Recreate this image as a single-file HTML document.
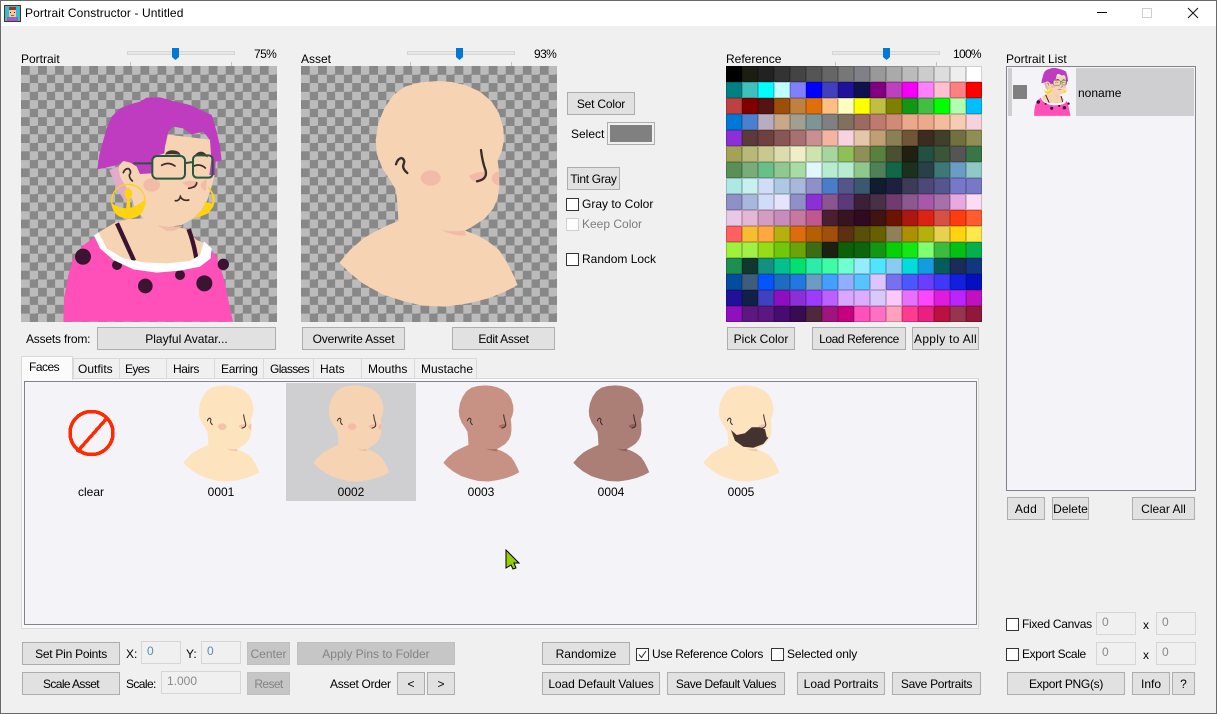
<!DOCTYPE html>
<html><head><meta charset="utf-8"><title>Portrait Constructor</title>
<style>
*{box-sizing:border-box}
html,body{margin:0;padding:0}
body{width:1217px;height:714px;overflow:hidden;background:#f0f0f0;position:relative;font:12px "Liberation Sans",sans-serif;color:#000}
.a{position:absolute}
.t{position:absolute;white-space:nowrap;line-height:14px}
.b{position:absolute;height:23px;background:#e1e1e1;border:1px solid #adadad;text-align:center;line-height:23px;white-space:nowrap}
.d{background:#c6c6c6;border-color:#c0c0c0;color:#838383}
.c{position:absolute;width:13px;height:13px;background:#fff;border:1px solid #333}
.i{position:absolute;height:23px;background:#f0f0f0;border:1px solid #d6d6d6;color:#8a8a8a;padding-left:5px;line-height:18px;white-space:nowrap}
.tab{position:absolute;top:358px;height:21px;background:#f0f0f0;border:1px solid #d9d9d9;line-height:20px;padding-left:4px}
.chk{position:absolute;width:256px;height:256px;top:66px;background-color:#888;background-image:conic-gradient(#bbb 25%,#888 0 50%,#bbb 0 75%,#888 0);background-size:17.067px 17.067px}
.tr{position:absolute;top:51px;width:108px;height:4px;background:#e7e7e7;border:1px solid #d6d6d6}
.th{position:absolute;top:48px;width:7px;height:12px;background:#0078d7;clip-path:polygon(0 0,100% 0,100% 75%,50% 100%,0 75%)}
.tk{position:absolute;top:62px;width:1px;height:4px;background:#c4c4c4}
.pal{position:absolute;left:726px;top:66px;width:256px;height:256px;display:grid;grid-template-columns:repeat(16,16px);grid-auto-rows:16px}
.pal i{display:block;box-shadow:inset 0 0 0 1px rgba(0,0,0,.18)}
.f{position:absolute;top:379px;width:109px;height:109px}
.l{position:absolute;top:485px;width:60px;text-align:center;line-height:14px}
</style></head><body>
<svg width="0" height="0" style="position:absolute">
<symbol id="face" viewBox="18 78 768 768">
<polygon fill="var(--s)" points="430,123 470,126 510,135 555,155 590,185 612,220 625,265 627,300 620,335 608,362 612,395 613,440 608,475 595,505 570,535 535,558 510,572 545,585 580,605 612,630 635,665 655,705 668,735 630,755 580,775 520,790 450,800 380,797 320,782 260,762 200,728 160,695 133,668 165,630 205,595 240,575 280,555 310,543 308,500 303,450 285,420 262,385 245,340 242,300 250,250 268,205 295,165 330,140 375,127"/>
<ellipse cx="407" cy="414" rx="30" ry="23" fill="var(--c)"/>
<path fill="var(--c)" d="M612 394Q592 398 590 415Q592 432 611 437Z"/>
<path fill="var(--b)" d="M522 408Q540 396 570 395L572 418Q545 428 530 420Z"/>
<path fill="var(--b)" d="M437 568Q470 578 508 571L513 587Q470 588 437 568Z"/>
<path fill="none" stroke="#392c2c" stroke-width="7" stroke-linecap="round" d="M303 373Q308 355 320 354Q331 360 326 372Q320 385 337 399"/>
<path fill="none" stroke="#392c2c" stroke-width="7" stroke-linecap="round" d="M558 330Q562 365 572 392Q578 418 546 424"/>
</symbol>
<symbol id="port" viewBox="63 198 768 768">
<polygon fill="#e2aacb" points="328,510 352,500 395,560 378,610 350,565"/>
<polygon fill="#ff4fb8" points="190,965 193,890 205,825 222,770 245,740 285,710 400,800 600,790 630,745 650,770 670,830 685,900 699,965"/>
<polygon fill="#f6d3b3" points="290,700 345,668 385,657 440,655 480,680 555,685 590,720 625,735 600,790 480,812 370,785 310,750"/>
<path fill="none" stroke="#3a1430" stroke-width="13" d="M351 670L402 782M566 688Q582 730 590 782"/>
<circle cx="249" cy="770" r="24" fill="#3a1430"/><circle cx="670" cy="793" r="17" fill="#3a1430"/><circle cx="436" cy="858" r="22" fill="#3a1430"/><circle cx="613" cy="850" r="24" fill="#3a1430"/><circle cx="540" cy="825" r="15" fill="#3a1430"/><circle cx="351" cy="795" r="15" fill="#3a1430"/>
<polygon fill="#fff" points="282,706 296,698 320,745 370,775 430,787 500,790 570,783 600,765 612,724 635,745 632,775 600,800 540,812 470,818 400,808 340,780 300,745"/>
<polygon fill="#f6d3b3" points="355,500 370,483 395,490 470,400 640,420 645,520 635,560 622,600 605,630 580,655 545,675 500,682 465,675 430,655 405,625 395,595 375,555 360,530"/>
<polygon fill="#f0bda8" points="475,677 510,681 548,678 525,692 500,693"/>
<polygon fill="#bf3bbf" points="292,508 298,465 310,420 320,385 335,350 360,325 390,313 420,305 440,293 480,292 520,303 570,315 635,345 650,395 660,440 665,482 647,485 645,525 628,525 634,480 630,420 610,395 575,403 550,385 520,380 505,395 495,440 493,460 460,470 455,520 420,522 410,500 390,487 370,483 352,495"/>
<ellipse cx="455" cy="555" rx="25" ry="20" fill="#f3baa8"/>
<path fill="#f3baa8" d="M620 538Q600 545 603 560Q608 572 618 572ZM546 548Q570 538 590 545L585 565Q560 562 546 548Z"/>
<path fill="#43322f" d="M495 464Q500 450 520 451Q538 452 542 465Q520 460 495 464ZM583 468Q590 455 605 455Q618 458 624 472Q600 464 583 468Z"/>
<path fill="none" stroke="#392c2c" stroke-width="5" stroke-linecap="round" d="M370 518Q375 505 386 506Q396 515 388 525Q388 535 397 543M485 496Q505 484 525 498M582 498Q600 490 616 504M590 548Q590 562 566 565M526 602Q537 604 541 590Q548 604 566 600"/>
<path fill="none" stroke="#25583f" stroke-width="6" d="M400 490H457M557 489L580 486"/>
<rect x="457" y="468" width="98" height="68" rx="14" fill="none" stroke="#25583f" stroke-width="6"/>
<rect x="579" y="466" width="59" height="67" rx="12" fill="none" stroke="#25583f" stroke-width="6"/>
<circle cx="385" cy="603" r="50" fill="none" stroke="#ffd30f" stroke-width="4"/>
<path fill="#ffd30f" d="M336 610Q385 644 433 600Q440 652 385 656Q336 652 336 610Z"/>
<path fill="#ffd30f" d="M373 578Q378 563 385 563Q393 566 397 578Q396 590 389 598L392 630H378L381 598Q374 590 373 578Z"/>
<polygon fill="#ffd30f" points="582,655 600,650 625,640 640,620 645,600 640,580 628,562 622,560 634,580 638,600 636,610 615,606 610,625"/>
</symbol>
</svg>

<!-- title bar -->
<div class="a" style="left:0;top:0;width:1217px;height:26px;background:#fff"></div>
<div class="a" style="left:0;top:0;width:1217px;height:714px;border:1px solid #6a6a6a;z-index:9;pointer-events:none"></div>
<svg class="a" style="left:4px;top:5px" width="17" height="17" viewBox="0 0 17 17"><rect width="17" height="17" fill="#7a1f10"/><rect x="1" y="1" width="15" height="15" fill="#2cc0d8"/><rect x="5" y="2" width="7" height="3" fill="#a0341a"/><rect x="5" y="5" width="7" height="7" fill="#f5c79b"/><rect x="6" y="7" width="1" height="1" fill="#222"/><rect x="10" y="7" width="1" height="1" fill="#222"/><rect x="7" y="10" width="3" height="1" fill="#c05030"/><rect x="3" y="12" width="11" height="4" fill="#8a68c8"/></svg>
<div class="t" style="left:25px;top:6px;letter-spacing:.1px">Portrait Constructor - Untitled</div>
<div class="a" style="left:1097px;top:12px;width:10px;height:1px;background:#000"></div>
<div class="a" style="left:1142px;top:8px;width:10px;height:10px;border:1px solid #cfcfcf"></div>
<svg class="a" style="left:1187px;top:7px" width="12" height="12"><path d="M1 1L11 11M11 1L1 11" stroke="#111" fill="none"/></svg>

<!-- portrait -->
<div class="t" style="left:21px;top:52px">Portrait</div>
<div class="tr" style="left:127px"></div><div class="th" style="left:172px"></div><div class="tk" style="left:130px"></div><div class="tk" style="left:231px"></div>
<div class="t" style="left:254px;top:47px;letter-spacing:-.6px">75%</div>
<div class="chk" style="left:21px"><svg width="256" height="256"><use href="#port" width="256" height="256"/></svg></div>

<!-- asset -->
<div class="t" style="left:301px;top:52px">Asset</div>
<div class="tr" style="left:407px"></div><div class="th" style="left:456px"></div><div class="tk" style="left:410px"></div><div class="tk" style="left:511px"></div>
<div class="t" style="left:534px;top:47px;letter-spacing:-.6px">93%</div>
<div class="chk" style="left:301px;--s:#f6d3b3;--b:#f3baa8;--c:#f3baa8"><svg width="256" height="256"><use href="#face" width="256" height="256"/></svg></div>

<div class="t" style="left:26px;top:332px;letter-spacing:-.2px">Assets from:</div>
<div class="b" style="left:97px;top:327px;width:179px">Playful Avatar...</div>
<div class="b" style="left:302px;top:327px;width:103px;letter-spacing:-.15px">Overwrite Asset</div>
<div class="b" style="left:452px;top:327px;width:103px;letter-spacing:-.3px">Edit Asset</div>

<!-- colour controls -->
<div class="b" style="left:567px;top:92px;width:68px;letter-spacing:-.2px">Set Color</div>
<div class="t" style="left:571px;top:127px">Select</div>
<div class="a" style="left:607px;top:122px;width:48px;height:23px;background:#808080;border:3px solid #f0f0f0;outline:1px solid #adadad;outline-offset:-1px"></div>
<div class="b" style="left:567px;top:167px;width:53px;letter-spacing:-.3px">Tint Gray</div>
<div class="c" style="left:566px;top:198px"></div><div class="t" style="left:582px;top:197px">Gray to Color</div>
<div class="c" style="left:566px;top:218px;border-color:#d0d0d0"></div><div class="t" style="left:582px;top:217px;color:#7d7d7d">Keep Color</div>
<div class="c" style="left:566px;top:253px"></div><div class="t" style="left:582px;top:252px">Random Lock</div>

<!-- reference -->
<div class="t" style="left:726px;top:52px">Reference</div>
<div class="tr" style="left:832px"></div><div class="th" style="left:883px"></div><div class="tk" style="left:835px"></div><div class="tk" style="left:936px"></div>
<div class="t" style="left:953px;top:47px;letter-spacing:-.7px">100%</div>
<div class="pal">
<i style="background:#000000"></i><i style="background:#1b1e10"></i><i style="background:#222222"></i><i style="background:#333333"></i><i style="background:#444444"></i><i style="background:#555555"></i><i style="background:#666666"></i><i style="background:#777777"></i><i style="background:#808088"></i><i style="background:#999999"></i><i style="background:#aaaaaa"></i><i style="background:#bbbbbb"></i><i style="background:#cccccc"></i><i style="background:#dddddd"></i><i style="background:#eeeeee"></i><i style="background:#ffffff"></i>
<i style="background:#008080"></i><i style="background:#40bfbf"></i><i style="background:#00ffff"></i><i style="background:#bfffff"></i><i style="background:#8080ff"></i><i style="background:#0000ff"></i><i style="background:#4040bf"></i><i style="background:#20109a"></i><i style="background:#10104f"></i><i style="background:#800080"></i><i style="background:#bf40bf"></i><i style="background:#f500f5"></i><i style="background:#ff80ff"></i><i style="background:#ffbfcf"></i><i style="background:#ff8080"></i><i style="background:#ff0000"></i>
<i style="background:#bf4040"></i><i style="background:#800000"></i><i style="background:#551414"></i><i style="background:#9c4f08"></i><i style="background:#bf8040"></i><i style="background:#df6f0b"></i><i style="background:#ffbf80"></i><i style="background:#ffffbf"></i><i style="background:#ffff00"></i><i style="background:#bfbf40"></i><i style="background:#808000"></i><i style="background:#149614"></i><i style="background:#40bf40"></i><i style="background:#00ff00"></i><i style="background:#afffaf"></i><i style="background:#00bfff"></i>
<i style="background:#0078d7"></i><i style="background:#4c7fcf"></i><i style="background:#b8acbf"></i><i style="background:#c9a88a"></i><i style="background:#a19f90"></i><i style="background:#7f9494"></i><i style="background:#808080"></i><i style="background:#7f7060"></i><i style="background:#9c6a60"></i><i style="background:#bf7a70"></i><i style="background:#cf8b75"></i><i style="background:#eba98b"></i><i style="background:#ebaa8c"></i><i style="background:#f3bc9c"></i><i style="background:#f6ccb3"></i><i style="background:#f6d3db"></i>
<i style="background:#8a30d6"></i><i style="background:#5a3a3a"></i><i style="background:#704040"></i><i style="background:#8a5555"></i><i style="background:#a87070"></i><i style="background:#c89090"></i><i style="background:#f3b5a0"></i><i style="background:#f6d3df"></i><i style="background:#e3c7a8"></i><i style="background:#c09f75"></i><i style="background:#8a8055"></i><i style="background:#705538"></i><i style="background:#3c2c20"></i><i style="background:#40402a"></i><i style="background:#707040"></i><i style="background:#8f8f55"></i>
<i style="background:#a3a358"></i><i style="background:#b8b878"></i><i style="background:#c8c890"></i><i style="background:#dcdcac"></i><i style="background:#eeeec8"></i><i style="background:#cce4ae"></i><i style="background:#a8d59f"></i><i style="background:#90bf58"></i><i style="background:#8f8f58"></i><i style="background:#5a8040"></i><i style="background:#4a5030"></i><i style="background:#1f2010"></i><i style="background:#235040"></i><i style="background:#3a5538"></i><i style="background:#555555"></i><i style="background:#3a7548"></i>
<i style="background:#5a9058"></i><i style="background:#78ac78"></i><i style="background:#68c088"></i><i style="background:#90c890"></i><i style="background:#a8dca4"></i><i style="background:#e0f8fc"></i><i style="background:#b8ecd0"></i><i style="background:#b8ecd0"></i><i style="background:#90c88c"></i><i style="background:#508058"></i><i style="background:#106848"></i><i style="background:#1c3020"></i><i style="background:#2a4048"></i><i style="background:#3c7878"></i><i style="background:#6b9cc4"></i><i style="background:#90c8c8"></i>
<i style="background:#aee8e4"></i><i style="background:#c8f0f0"></i><i style="background:#d0dcf8"></i><i style="background:#acc8e4"></i><i style="background:#a8b8dc"></i><i style="background:#9090c8"></i><i style="background:#4c7cc8"></i><i style="background:#55558c"></i><i style="background:#3c5870"></i><i style="background:#101c30"></i><i style="background:#1f2040"></i><i style="background:#3c3c58"></i><i style="background:#4c4878"></i><i style="background:#55558f"></i><i style="background:#7878c8"></i><i style="background:#7878c8"></i>
<i style="background:#9090c8"></i><i style="background:#a8b8dc"></i><i style="background:#d0dcf8"></i><i style="background:#e4e4fc"></i><i style="background:#9090c8"></i><i style="background:#8a30d6"></i><i style="background:#8a5590"></i><i style="background:#5a3a78"></i><i style="background:#3c2038"></i><i style="background:#483048"></i><i style="background:#703c70"></i><i style="background:#8c5890"></i><i style="background:#a858a8"></i><i style="background:#a870a8"></i><i style="background:#e8a8e0"></i><i style="background:#fcdcf4"></i>
<i style="background:#e8c8e4"></i><i style="background:#e4b8d4"></i><i style="background:#d49cc0"></i><i style="background:#c88cbc"></i><i style="background:#c878a0"></i><i style="background:#c05890"></i><i style="background:#4a2030"></i><i style="background:#381420"></i><i style="background:#300a20"></i><i style="background:#401410"></i><i style="background:#6c1400"></i><i style="background:#ac1810"></i><i style="background:#dc2414"></i><i style="background:#d85044"></i><i style="background:#ff3c10"></i><i style="background:#ff5c30"></i>
<i style="background:#ff6060"></i><i style="background:#f8bc30"></i><i style="background:#ffa840"></i><i style="background:#b4b00c"></i><i style="background:#dc6c0c"></i><i style="background:#b46000"></i><i style="background:#a05008"></i><i style="background:#5c3010"></i><i style="background:#585008"></i><i style="background:#686000"></i><i style="background:#908058"></i><i style="background:#ac9000"></i><i style="background:#b4b00c"></i><i style="background:#e8d050"></i><i style="background:#ffd40c"></i><i style="background:#ffe84c"></i>
<i style="background:#a0f040"></i><i style="background:#a0f048"></i><i style="background:#98dc18"></i><i style="background:#70c808"></i><i style="background:#6ca408"></i><i style="background:#3c6c14"></i><i style="background:#1c2010"></i><i style="background:#0c6008"></i><i style="background:#0c640c"></i><i style="background:#149614"></i><i style="background:#08d008"></i><i style="background:#14e814"></i><i style="background:#80ff70"></i><i style="background:#3cbc3c"></i><i style="background:#04c014"></i><i style="background:#04b04c"></i>
<i style="background:#1c9050"></i><i style="background:#103830"></i><i style="background:#149080"></i><i style="background:#04c090"></i><i style="background:#04e070"></i><i style="background:#2cecac"></i><i style="background:#3cfca4"></i><i style="background:#70ffd0"></i><i style="background:#94ecff"></i><i style="background:#50e4ff"></i><i style="background:#88ccf0"></i><i style="background:#04dcdc"></i><i style="background:#149ce0"></i><i style="background:#045c5c"></i><i style="background:#1c2c58"></i><i style="background:#103880"></i>
<i style="background:#044ca0"></i><i style="background:#405c7c"></i><i style="background:#0454ff"></i><i style="background:#1c6cc0"></i><i style="background:#2078e0"></i><i style="background:#6c9cc4"></i><i style="background:#44a0ff"></i><i style="background:#90b0ff"></i><i style="background:#58c4ff"></i><i style="background:#dcc4ff"></i><i style="background:#7870f0"></i><i style="background:#4c58ff"></i><i style="background:#6840fc"></i><i style="background:#4038f8"></i><i style="background:#1020dc"></i><i style="background:#0410c0"></i>
<i style="background:#20109a"></i><i style="background:#102048"></i><i style="background:#4040c0"></i><i style="background:#8c10c0"></i><i style="background:#8a30d6"></i><i style="background:#9c3cff"></i><i style="background:#bc60ff"></i><i style="background:#d8a8ff"></i><i style="background:#dcacff"></i><i style="background:#d8c8fc"></i><i style="background:#fcc8fc"></i><i style="background:#e870fc"></i><i style="background:#fc48fc"></i><i style="background:#e01cdc"></i><i style="background:#bc24ff"></i><i style="background:#c010c0"></i>
<i style="background:#9010c0"></i><i style="background:#5c1880"></i><i style="background:#5c1880"></i><i style="background:#480c70"></i><i style="background:#380c50"></i><i style="background:#50283c"></i><i style="background:#a01480"></i><i style="background:#c80080"></i><i style="background:#ff50bc"></i><i style="background:#ff70c4"></i><i style="background:#ffa0bc"></i><i style="background:#ff3c90"></i><i style="background:#e82080"></i><i style="background:#bc1040"></i><i style="background:#983450"></i><i style="background:#901838"></i>
</div>
<div class="b" style="left:727px;top:327px;width:68px">Pick Color</div>
<div class="b" style="left:812px;top:327px;width:94px;letter-spacing:-.4px">Load Reference</div>
<div class="b" style="left:912px;top:327px;width:67px;letter-spacing:.3px">Apply to All</div>

<!-- tabs -->
<div class="a" style="left:21px;top:378px;width:958px;height:251px;border:1px solid #d9d9d9;background:#f9f9f9"></div>
<div class="a" style="left:24px;top:381px;width:953px;height:244px;border:1px solid #82828c;background:#f3f3f8"></div>
<div class="tab" style="left:73px;width:47px">Outfits</div>
<div class="tab" style="left:119px;width:48px;padding-left:5px;letter-spacing:-.6px">Eyes</div>
<div class="tab" style="left:166px;width:49px;padding-left:6px;letter-spacing:-.4px">Hairs</div>
<div class="tab" style="left:214px;width:50px;padding-left:6px;letter-spacing:-.3px">Earring</div>
<div class="tab" style="left:263px;width:51px;padding-left:6px;letter-spacing:-.6px">Glasses</div>
<div class="tab" style="left:313px;width:49px;padding-left:6px">Hats</div>
<div class="tab" style="left:361px;width:54px;padding-left:6px">Mouths</div>
<div class="tab" style="left:414px;width:63px;padding-left:6px">Mustache</div>
<div class="a" style="left:21px;top:356px;width:52px;height:24px;background:#fbfbfb;border:1px solid #d9d9d9;border-bottom:0;line-height:21px;padding-left:7px;letter-spacing:-.5px">Faces</div>

<!-- asset cells -->
<div class="a" style="left:286px;top:383px;width:130px;height:118px;background:#cfcfd1"></div>
<svg class="a" style="left:66px;top:408px" width="52" height="52" viewBox="0 0 52 52" shape-rendering="crispEdges"><circle cx="25.5" cy="25" r="21.5" fill="none" stroke="#ff2a00" stroke-width="3.5"/><path d="M11 44L42 9" stroke="#ff2a00" stroke-width="3.5" fill="none"/></svg>
<div class="l" style="left:61px">clear</div>
<svg class="f" style="left:166.5px;--s:#fde3be;--b:#f3c4aa;--c:#f3c4aa"><use href="#face" width="109" height="109"/></svg>
<div class="l" style="left:191px">0001</div>
<svg class="f" style="left:296.5px;--s:#f6d3b3;--b:#f3baa8;--c:#f3baa8"><use href="#face" width="109" height="109"/></svg>
<div class="l" style="left:321px">0002</div>
<svg class="f" style="left:426.5px;--s:#c79283;--b:#a86c60;--c:transparent"><use href="#face" width="109" height="109"/></svg>
<div class="l" style="left:451px">0003</div>
<svg class="f" style="left:556.5px;--s:#ab7f75;--b:#8f5d55;--c:transparent"><use href="#face" width="109" height="109"/></svg>
<div class="l" style="left:581px">0004</div>
<svg class="f" style="left:686.5px;--s:#fde3be;--b:#f3c4aa;--c:transparent"><use href="#face" width="109" height="109"/></svg>
<svg class="a" style="left:0;top:0;pointer-events:none" width="1217" height="714"><polygon fill="#43322f" points="731,430 736.7,435 745,433.3 751.7,427.3 760,427.3 765,429.3 766.7,436.7 768.3,437.7 763.3,444 753.3,447.7 743.3,446.7 735,440.7"/></svg>
<div class="l" style="left:711px">0005</div>
<svg class="a" style="left:505px;top:549px" width="16" height="21" viewBox="0 0 16 21"><path d="M1 1L14 14H9L11 19L8 20L6 16L1 19Z" fill="#94cc08" stroke="#000" stroke-width="1"/></svg>

<!-- portrait list -->
<div class="t" style="left:1006px;top:52px">Portrait List</div>
<div class="a" style="left:1006px;top:66px;width:190px;height:425px;border:1px solid #82828c;background:#f3f3f8"></div>
<div class="a" style="left:1008px;top:68px;width:186px;height:48px;background:#cfcfd1"></div>
<div class="a" style="left:1012px;top:68px;width:64px;height:48px;background:#f3f3f8;overflow:hidden"><svg style="position:absolute;left:13px;top:-7px" width="55" height="55"><use href="#port" width="55" height="55"/></svg></div>
<div class="a" style="left:1013px;top:85px;width:14px;height:14px;background:#808080"></div>
<div class="t" style="left:1078px;top:86px">noname</div>
<div class="b" style="left:1007px;top:497px;width:38px;letter-spacing:.3px">Add</div>
<div class="b" style="left:1052px;top:497px;width:37px">Delete</div>
<div class="b" style="left:1132px;top:497px;width:63px">Clear All</div>

<div class="c" style="left:1006px;top:618px"></div><div class="t" style="left:1022px;top:617px;letter-spacing:-.3px">Fixed Canvas</div>
<div class="i" style="left:1096px;top:612px;width:40px">0</div><div class="t" style="left:1143px;top:618px">x</div><div class="i" style="left:1156px;top:612px;width:40px">0</div>
<div class="c" style="left:1006px;top:648px"></div><div class="t" style="left:1022px;top:647px;letter-spacing:-.35px">Export Scale</div>
<div class="i" style="left:1096px;top:642px;width:40px">0</div><div class="t" style="left:1143px;top:648px">x</div><div class="i" style="left:1156px;top:642px;width:40px">0</div>
<div class="b" style="left:1007px;top:672px;width:118px;letter-spacing:-.3px">Export PNG(s)</div>
<div class="b" style="left:1132px;top:672px;width:38px">Info</div>
<div class="b" style="left:1172px;top:672px;width:23px">?</div>

<!-- bottom left -->
<div class="b" style="left:22px;top:642px;width:98px;letter-spacing:-.25px">Set Pin Points</div>
<div class="t" style="left:126px;top:647px">X:</div>
<div class="i" style="left:141px;top:641px;width:40px;color:#5a8cc0">0</div>
<div class="t" style="left:186px;top:647px">Y:</div>
<div class="i" style="left:201px;top:641px;width:40px;color:#5a8cc0">0</div>
<div class="b d" style="left:247px;top:642px;width:43px">Center</div>
<div class="b d" style="left:297px;top:642px;width:158px">Apply Pins to Folder</div>
<div class="b" style="left:22px;top:672px;width:98px;letter-spacing:-.6px">Scale Asset</div>
<div class="t" style="left:126px;top:677px;letter-spacing:-.6px">Scale:</div>
<div class="i" style="left:161px;top:671px;width:80px">1.000</div>
<div class="b d" style="left:247px;top:672px;width:43px;letter-spacing:-.6px">Reset</div>
<div class="t" style="left:330px;top:677px;letter-spacing:-.3px">Asset Order</div>
<div class="b" style="left:397px;top:672px;width:28px">&lt;</div>
<div class="b" style="left:427px;top:672px;width:28px">&gt;</div>

<!-- bottom middle -->
<div class="b" style="left:542px;top:642px;width:88px">Randomize</div>
<div class="c" style="left:636px;top:648px"></div>
<svg class="a" style="left:636px;top:648px" width="13" height="13"><path d="M3 6.5L5.5 9.5L10 3" fill="none" stroke="#333"/></svg>
<div class="t" style="left:652px;top:647px;letter-spacing:-.35px">Use Reference Colors</div>
<div class="c" style="left:771px;top:648px"></div><div class="t" style="left:787px;top:647px;letter-spacing:-.15px">Selected only</div>
<div class="b" style="left:542px;top:672px;width:118px;letter-spacing:-.1px">Load Default Values</div>
<div class="b" style="left:667px;top:672px;width:118px;letter-spacing:-.4px">Save Default Values</div>
<div class="b" style="left:797px;top:672px;width:88px">Load Portraits</div>
<div class="b" style="left:892px;top:672px;width:89px;letter-spacing:-.3px">Save Portraits</div>
</body></html>
